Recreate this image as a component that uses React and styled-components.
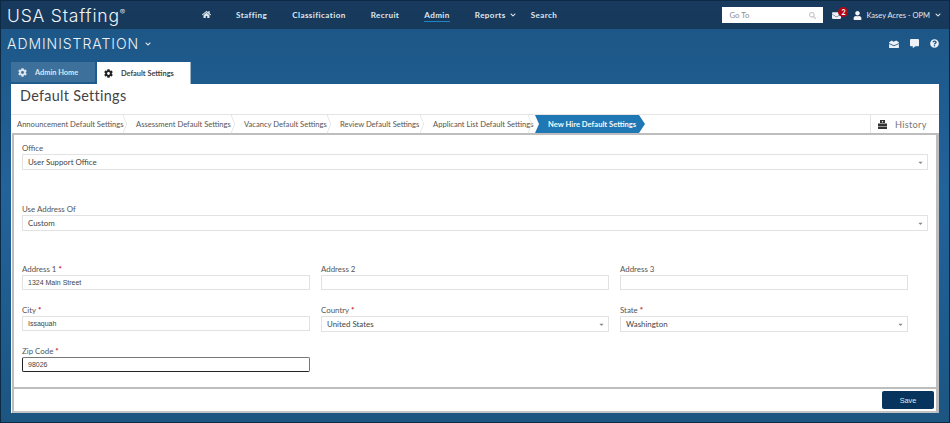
import React from 'react';
import styled, { createGlobalStyle } from 'styled-components';
import { FaHome, FaCog, FaEnvelope, FaUser, FaChevronDown, FaCommentAlt, FaQuestionCircle, FaSearch, FaCaretDown } from 'react-icons/fa';

const GlobalStyle = createGlobalStyle`
  html, body { margin: 0; padding: 0; }
  body { font-family: Lato, "Open Sans", sans-serif; background: #1f5b8a; }
  * { box-sizing: border-box; }
`;

const Page = styled.div`
  width: 950px;
  height: 423px;
  display: flex;
  flex-direction: column;
  border: 1px solid #0d2a45;
  background: linear-gradient(#1c5584, #22639a 45%, #1d5a8a 85%, #1c5580);
  overflow: hidden;
`;

const TopBar = styled.header`
  height: 28px;
  flex: none;
  display: flex;
  align-items: center;
  background: linear-gradient(#173a5e, #17395a);
  padding: 0 8px 0 6px;
`;

const Logo = styled.div`
  width: 195px;
  font-family: "Inter", "Open Sans", sans-serif;
  font-size: 17.5px;
  font-weight: 300;
  letter-spacing: 0.8px;
  color: #f2f5f8;
  sup { font-size: 8px; line-height: 0; vertical-align: 7px; letter-spacing: 0; }
`;

const Nav = styled.nav`
  display: flex;
  align-items: center;
  flex: 1;
  color: #dfe7ee;
  font-size: 8.1px;
  font-weight: 700;
  letter-spacing: 0.4px;
`;

const NavItem = styled.a`
  display: flex;
  align-items: center;
  gap: 4px;
  margin-left: ${p => p.$gap}px;
  height: 14px;
  border-bottom: 1px solid ${p => (p.$active ? '#1f86c6' : 'transparent')};
`;

const GoTo = styled.div`
  width: 101px;
  height: 16px;
  background: #fff;
  display: flex;
  align-items: center;
  justify-content: space-between;
  padding: 0 7px;
  font-size: 7.8px;
  color: #8d8d8d;
`;

const Mail = styled.div`
  position: relative;
  margin-left: 9px;
  display: flex;
  color: #eef2f6;
`;

const Badge = styled.span`
  position: absolute;
  top: -4px;
  left: 6px;
  width: 10px;
  height: 10px;
  border-radius: 50%;
  background: #b0081a;
  color: #fff;
  font-size: 7px;
  font-weight: 700;
  line-height: 10px;
  text-align: center;
`;

const UserName = styled.div`
  display: flex;
  align-items: center;
  margin-left: 12px;
  color: #e2e9ef;
  font-size: 7.5px;
  white-space: nowrap;
  span { margin: 0 5px 0 4px; }
`;

const SubBar = styled.div`
  height: 29px;
  flex: none;
  display: flex;
  align-items: center;
  justify-content: space-between;
  padding: 0 10px 0 6px;
`;

const Section = styled.div`
  display: flex;
  align-items: center;
  gap: 6px;
  font-family: "Inter", "Open Sans", sans-serif;
  font-size: 14px;
  font-weight: 300;
  letter-spacing: 0.95px;
  color: #eef2f6;
`;

const QuickIcons = styled.div`
  display: flex;
  align-items: center;
  gap: 11px;
  color: #eef2f6;
`;

const Tabs = styled.div`
  flex: none;
  height: 26px;
  margin-top: 4px;
  padding-left: 10px;
  display: flex;
  align-items: flex-start;
  gap: 2px;
`;

const Tab = styled.div`
  display: flex;
  align-items: center;
  gap: 8px;
  height: ${p => (p.$active ? 22 : 20)}px;
  width: ${p => (p.$active ? 94 : 84)}px;
  padding-left: 7px;
  font-size: 7.4px;
  font-weight: 700;
  background: ${p => (p.$active ? '#fff' : '#3e709c')};
  color: ${p => (p.$active ? '#444' : '#dde6ee')};
  border-right: ${p => (p.$active ? '1px solid #9db4c8' : '0')};
`;

const Panel = styled.main`
  margin: -4px 10px 0 10px;
  height: 329px;
  flex: none;
  background: #fff;
  display: flex;
  flex-direction: column;
`;

const Title = styled.h1`
  margin: 0;
  height: 30px;
  flex: none;
  padding: 3px 0 0 9px;
  font-family: Lato, "Open Sans", sans-serif;
  font-size: 14.4px;
  line-height: 18px;
  font-weight: 400;
  letter-spacing: 0.3px;
  color: #444;
`;

const Steps = styled.div`
  height: 19px;
  flex: none;
  display: flex;
  border-top: 1px solid #e4e4e4;
  font-size: 7.6px;
  color: #555;
`;

const Step = styled.div`
  display: flex;
  align-items: center;
  width: ${p => p.$w}px;
  padding-left: 6px;
  white-space: nowrap;
  position: relative;
  &::after {
    content: '';
    position: absolute;
    right: 0;
    top: 2px;
    width: 13px;
    height: 13px;
    border-top: 1px solid #d8d8d8;
    border-right: 1px solid #d8d8d8;
    transform: scaleX(0.4) rotate(45deg);
  }
`;

const ActiveStep = styled.div`
  width: 110px;
  display: flex;
  align-items: center;
  padding-left: 13px;
  background: #1f78b4;
  color: #f3f8fb;
  font-weight: 700;
  white-space: nowrap;
  clip-path: polygon(0 0, 104px 0, 110px 50%, 104px 100%, 0 100%, 4px 50%);
`;

const History = styled.div`
  margin-left: auto;
  width: 69px;
  display: flex;
  align-items: center;
  gap: 8px;
  padding-left: 7px;
  border-left: 1px solid #e4e4e4;
  font-size: 9.2px;
  letter-spacing: 0.3px;
  color: #777;
  svg { color: #333; }
`;

const Body = styled.div`
  flex: 1;
  margin: 0 0 0 1px;
  border: 2px solid #bdbdbd;
  border-bottom: 0;
  border-right-width: 3px;
  display: flex;
  flex-direction: column;
  min-height: 0;
`;

const Form = styled.form`
  flex: 1;
  padding: 8px 8px 0 8px;
  display: flex;
  flex-direction: column;
`;

const Wide = styled.div`
  height: ${p => p.$h}px;
  flex: none;
`;

const Row = styled.div`
  display: grid;
  grid-template-columns: 288px 288px 288px;
  column-gap: 11px;
  height: ${p => p.$h}px;
  flex: none;
`;

const Label = styled.div`
  font-size: 7.9px;
  line-height: 10px;
  height: 11px;
  color: #555;
  b { color: #c1121f; font-weight: 700; }
`;

const Select = styled.div`
  height: 16px;
  display: flex;
  align-items: center;
  justify-content: space-between;
  padding: 0 3px 0 5px;
  border: 1px solid #e2e2e2;
  font-size: 7.9px;
  color: #444;
  svg { color: #888; }
`;

const Field = styled.div`
  height: 15px;
  display: flex;
  align-items: center;
  padding-left: 5px;
  border: 1px solid #e2e2e2;
  font-family: "Liberation Sans", sans-serif;
  font-size: 7px;
  color: #444;
`;

const ZipField = styled(Field)`
  border: 1.5px solid #222;
  border-top-color: #777;
  border-right-color: #777;
  border-radius: 2px;
`;

const Footer = styled.div`
  height: 26px;
  flex: none;
  display: flex;
  justify-content: flex-end;
  align-items: center;
  padding: 0 2px 0 0;
  border-top: 2px solid #bdbdbd;
  border-bottom: 2px solid #c4c4c4;
`;

const Save = styled.button`
  width: 52px;
  height: 18px;
  background: #07345c;
  border: 0;
  border-radius: 2px;
  color: #dfe8ef;
  font-family: "Liberation Sans", sans-serif;
  font-size: 7.3px;
  padding: 0;
`;

const Postcard = () => (
  <svg width="10" height="8" viewBox="0 0 11 9" fill="currentColor">
    <path d="M0 2.500 3 .5l2 1.500L8 .5l3 2V9H0z" />
    <path d="M0 4l5.500 2.500L11 4" fill="none" stroke="#1f5b8a" strokeWidth="1" />
  </svg>
);

const HistoryIcon = () => (
  <svg width="9" height="9" viewBox="0 0 9 9" fill="currentColor">
    <path d="M2 0h5v3H2z" />
    <path d="M0 3.500h9V6H0z" />
    <path d="M0 6.500h9V9H0z" />
    <circle cx="4.500" cy="1.700" r=".7" fill="#fff" />
  </svg>
);

const steps = [
  ['Announcement Default Settings', 119],
  ['Assessment Default Settings', 108],
  ['Vacancy Default Settings', 96],
  ['Review Default Settings', 93],
  ['Applicant List Default Settings', 108],
];

export default function App() {
  return (
    <Page>
      <GlobalStyle />
      <TopBar>
        <Logo>USA Staffing<sup>®</sup></Logo>
        <Nav>
          <NavItem $gap={0}><FaHome size={9} /></NavItem>
          <NavItem $gap={25}>Staffing</NavItem>
          <NavItem $gap={25}>Classification</NavItem>
          <NavItem $gap={25}>Recruit</NavItem>
          <NavItem $gap={25} $active>Admin</NavItem>
          <NavItem $gap={25}>Reports <FaChevronDown size={6} /></NavItem>
          <NavItem $gap={15}>Search</NavItem>
        </Nav>
        <GoTo>Go To <FaSearch size={7} color="#c4c4c4" /></GoTo>
        <Mail><FaEnvelope size={9} /><Badge>2</Badge></Mail>
        <UserName><FaUser size={9} color="#f3f6f8" /><span>Kasey Acres - OPM</span><FaChevronDown size={6} /></UserName>
      </TopBar>
      <SubBar>
        <Section>ADMINISTRATION <FaChevronDown size={6} /></Section>
        <QuickIcons>
          <Postcard />
          <FaCommentAlt size={9} />
          <FaQuestionCircle size={9} />
        </QuickIcons>
      </SubBar>
      <Tabs>
        <Tab><FaCog size={9} /> Admin Home</Tab>
        <Tab $active><FaCog size={9} color="#222" /> Default Settings</Tab>
      </Tabs>
      <Panel>
        <Title>Default Settings</Title>
        <Steps>
          {steps.map(([label, w]) => (
            <Step key={label} $w={w}>{label}</Step>
          ))}
          <ActiveStep>New Hire Default Settings</ActiveStep>
          <History><HistoryIcon /> History</History>
        </Steps>
        <Body>
          <Form>
            <Wide $h={61}>
              <Label>Office</Label>
              <Select>User Support Office <FaCaretDown size={7} /></Select>
            </Wide>
            <Wide $h={60}>
              <Label>Use Address Of</Label>
              <Select>Custom <FaCaretDown size={7} /></Select>
            </Wide>
            <Row $h={41}>
              <div><Label>Address 1 <b>*</b></Label><Field>1324 Main Street</Field></div>
              <div><Label>Address 2</Label><Field /></div>
              <div><Label>Address 3</Label><Field /></div>
            </Row>
            <Row $h={41}>
              <div><Label>City <b>*</b></Label><Field>Issaquah</Field></div>
              <div><Label>Country <b>*</b></Label><Select>United States <FaCaretDown size={7} /></Select></div>
              <div><Label>State <b>*</b></Label><Select>Washington <FaCaretDown size={7} /></Select></div>
            </Row>
            <Row $h={30}>
              <div><Label>Zip Code <b>*</b></Label><ZipField>98026</ZipField></div>
            </Row>
          </Form>
          <Footer><Save type="button">Save</Save></Footer>
        </Body>
      </Panel>
    </Page>
  );
}
